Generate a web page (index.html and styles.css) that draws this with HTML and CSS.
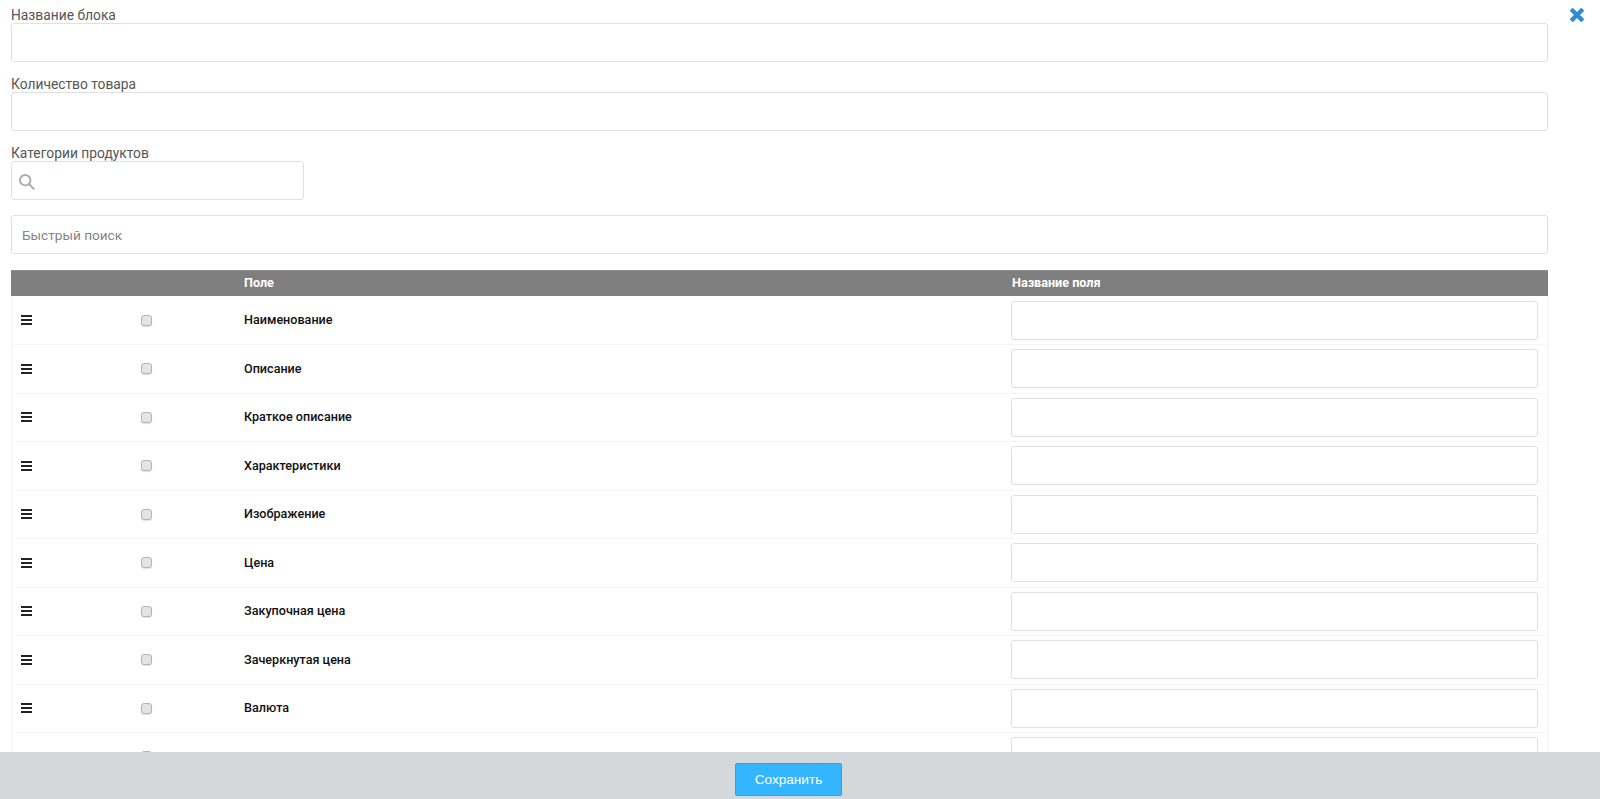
FILE: index.html
```html
<!doctype html>
<html lang="ru">
  <head>
    <meta charset="UTF-8" />
    <title>Настройки блока</title>
    <link rel="stylesheet" href="styles.css">
  </head>
  <body>
    <a class="close" href="#">
      <svg width="16" height="16" viewBox="0 0 16 16"><path d="M2.2 2.2 L13.8 13.8 M13.8 2.2 L2.2 13.8" /></svg>
    </a>

    <div class="content">
      <label class="field-label">Название блока</label>
      <input class="form-input" type="text" />

      <label class="field-label second">Количество товара</label>
      <input class="form-input" type="text" />

      <label class="field-label third">Категории продуктов</label>
      <div class="search-box">
        <svg width="16" height="16" viewBox="0 0 16 16"><circle cx="6.2" cy="6.2" r="5.2" /><path d="M10 10 L15.4 15.4" /></svg>
      </div>

      <input class="form-input quick-search" type="text" placeholder="Быстрый поиск" />

      <div class="table-head">
        <div></div>
        <div></div>
        <div>Поле</div>
        <div>Название поля</div>
      </div>

      <div class="row">
        <div class="handle"><span></span><span></span><span></span></div>
        <div><i class="check"></i></div>
        <div class="name">Наименование</div>
        <div><input class="form-input" type="text" /></div>
      </div>
      <div class="row">
        <div class="handle"><span></span><span></span><span></span></div>
        <div><i class="check"></i></div>
        <div class="name">Описание</div>
        <div><input class="form-input" type="text" /></div>
      </div>
      <div class="row">
        <div class="handle"><span></span><span></span><span></span></div>
        <div><i class="check"></i></div>
        <div class="name">Краткое описание</div>
        <div><input class="form-input" type="text" /></div>
      </div>
      <div class="row">
        <div class="handle"><span></span><span></span><span></span></div>
        <div><i class="check"></i></div>
        <div class="name">Характеристики</div>
        <div><input class="form-input" type="text" /></div>
      </div>
      <div class="row">
        <div class="handle"><span></span><span></span><span></span></div>
        <div><i class="check"></i></div>
        <div class="name">Изображение</div>
        <div><input class="form-input" type="text" /></div>
      </div>
      <div class="row">
        <div class="handle"><span></span><span></span><span></span></div>
        <div><i class="check"></i></div>
        <div class="name">Цена</div>
        <div><input class="form-input" type="text" /></div>
      </div>
      <div class="row">
        <div class="handle"><span></span><span></span><span></span></div>
        <div><i class="check"></i></div>
        <div class="name">Закупочная цена</div>
        <div><input class="form-input" type="text" /></div>
      </div>
      <div class="row">
        <div class="handle"><span></span><span></span><span></span></div>
        <div><i class="check"></i></div>
        <div class="name">Зачеркнутая цена</div>
        <div><input class="form-input" type="text" /></div>
      </div>
      <div class="row">
        <div class="handle"><span></span><span></span><span></span></div>
        <div><i class="check"></i></div>
        <div class="name">Валюта</div>
        <div><input class="form-input" type="text" /></div>
      </div>
      <div class="row">
        <div class="handle"><span></span><span></span><span></span></div>
        <div><i class="check"></i></div>
        <div class="name">Категория</div>
        <div><input class="form-input" type="text" /></div>
      </div>
    </div>

    <div class="footer">
      <button class="save-btn" type="button">Сохранить</button>
    </div>
  </body>
</html>
```

FILE: styles.css
```css
html,
body {
  height: 100%;
}

body {
  margin: 0;
  padding: 0;
  overflow: hidden;
  background: #fff;
  font-family: Roboto, "Liberation Sans", sans-serif;
  font-size: 13.6px;
  color: #4a4a4a;
}

.content {
  width: 1537px;
  margin-left: 11px;
  padding-top: 7px;
}

.field-label {
  display: block;
  height: 16px;
  line-height: 16px;
  font-size: 13.8px;
  color: #555;
}

.field-label.second {
  margin-top: 14px;
}

.field-label.third {
  margin-top: 14px;
}

.form-input {
  display: block;
  box-sizing: border-box;
  width: 100%;
  height: 39px;
  margin: 0;
  padding: 0 10px;
  background: #fff;
  border: 1px solid #e0e0e0;
  border-radius: 3px;
  font-family: inherit;
  font-size: 13.6px;
  outline: none;
}

.form-input::placeholder {
  color: #848484;
}

.search-box {
  display: flex;
  align-items: center;
  box-sizing: border-box;
  width: 293px;
  height: 39px;
  padding: 3px 0 0 7px;
  background: #fff;
  border: 1px solid #e0e0e0;
  border-radius: 3px;
}

.search-box svg {
  fill: none;
  stroke: #aaa;
  stroke-width: 1.9;
}

.quick-search {
  margin-top: 15px;
}

.table-head {
  display: grid;
  grid-template-columns: 130px 103px 768px 1fr;
  height: 26px;
  margin: 16px 0 0.5px;
  background: #7f7f7f;
  border-top: 1px solid #8f8f8f;
  box-sizing: border-box;
  line-height: 24px;
  font-size: 12.6px;
  font-weight: 700;
  color: #fff;
}

.row {
  display: grid;
  grid-template-columns: 129px 103px 767px 1fr;
  box-sizing: border-box;
  height: 48.5px;
  align-items: center;
  border: 1px solid #f5f5f5;
  border-top: 0;
  color: #111;
}

.row > div:last-child {
  padding-right: 9px;
}

.name {
  padding-bottom: 1px;
  font-size: 12.6px;
  font-weight: 500;
}

.handle {
  display: flex;
  flex-direction: column;
  gap: 2px;
  width: 11px;
  margin-left: 9px;
}

.handle span {
  height: 2px;
  background: #222;
}

.check {
  display: block;
  box-sizing: border-box;
  width: 11px;
  height: 11px;
  background: #e4e4e4;
  border: 1px solid #b5b5b5;
  border-radius: 3px;
  box-shadow: 0 1px 1px rgba(0, 0, 0, 0.12);
}

.close {
  position: absolute;
  top: 7px;
  right: 15px;
  display: block;
  width: 16px;
  height: 16px;
}

.close svg {
  display: block;
  stroke: #2f8dcf;
  stroke-width: 4.4;
}

.footer {
  position: fixed;
  left: 0;
  right: 0;
  bottom: 0;
  height: 47px;
  display: flex;
  justify-content: center;
  padding: 11px 23px 0 0;
  box-sizing: border-box;
  background: #d5d8db;
}

.save-btn {
  width: 107px;
  height: 33px;
  background: #33b5ff;
  border: 1px solid #2ba3e8;
  border-radius: 2px;
  font-family: "Liberation Sans", sans-serif;
  font-size: 13.6px;
  color: #fff;
  padding: 0;
}
```
